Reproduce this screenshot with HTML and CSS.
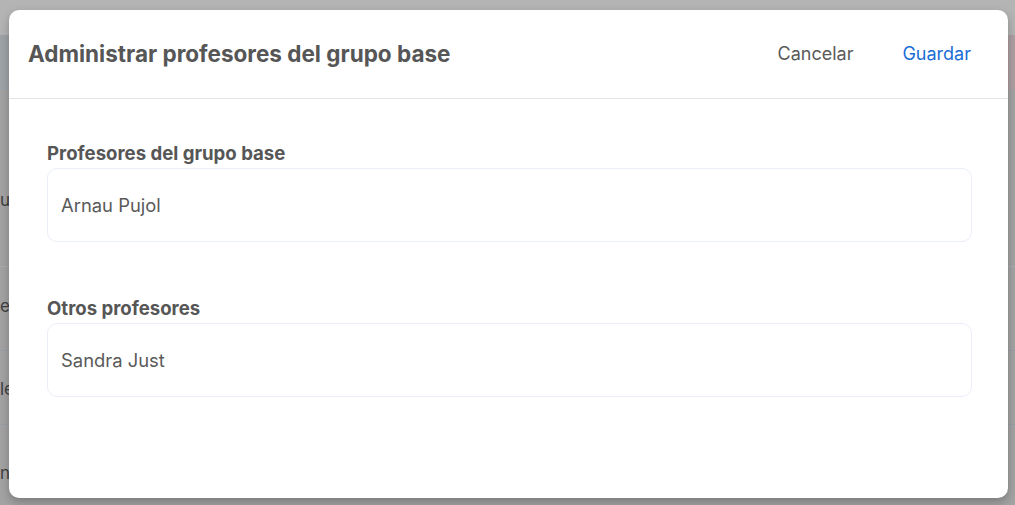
FILE: index.html
```html
<!DOCTYPE html>
<html lang="es">
<head>
<meta charset="utf-8">
<title>Administrar profesores del grupo base</title>
<link rel="stylesheet" href="styles.css">
</head>
<body>
<div class="page">
  <div class="topbar"></div>
  <div class="band"></div>
  <div class="rows">
    <div class="row row-a"><span class="cell">u</span></div>
    <div class="row row-b"><span class="cell">e</span></div>
    <div class="row row-c"><span class="cell">le</span></div>
    <div class="row row-d"><span class="cell">n</span></div>
  </div>
</div>
<div class="modal">
  <header class="modal-header">
    <h1 class="modal-title">Administrar profesores del grupo base</h1>
    <div class="actions">
      <button class="btn btn-cancel">Cancelar</button>
      <button class="btn btn-save">Guardar</button>
    </div>
  </header>
  <div class="modal-body">
    <section class="group">
      <h2 class="group-label">Profesores del grupo base</h2>
      <div class="list">
        <div class="item">Arnau Pujol</div>
      </div>
    </section>
    <section class="group">
      <h2 class="group-label">Otros profesores</h2>
      <div class="list">
        <div class="item">Sandra Just</div>
      </div>
    </section>
  </div>
</div>
</body>
</html>
```
FILE: styles.css
```css
* { box-sizing: border-box; }
html, body { margin: 0; padding: 0; }
body {
  width: 1015px;
  height: 505px;
  overflow: hidden;
  background: #a3a3a3;
  font-family: Inter, "Noto Sans", sans-serif;
}
.page { display: flex; flex-direction: column; height: 100%; }
.topbar { height: 35px; background: #b4b4b4; }
.band {
  height: 55px;
  background: linear-gradient(90deg, #9ea3a8 0%, #a4a3a7 50%, #ad9fa2 100%);
}
.rows { display: flex; flex-direction: column; }
.row {
  display: flex;
  align-items: center;
  border-bottom: 1px solid #9a9fa5;
  color: #3f3f3f;
  font-size: 17px;
}
.row-a { height: 177px; border-bottom-color: #a9abae; }
.row-b { height: 84px; }
.row-c { height: 74px; }
.row-d { height: 80px; border-bottom: none; }
.cell { margin-left: 0; }
.row-a .cell { margin-top: 44px; }
.row-b .cell { margin-top: -6px; }
.row-c .cell { margin-top: 2px; }
.row-d .cell { margin-top: 16px; }

.modal {
  position: absolute;
  left: 9px;
  top: 10px;
  width: 999px;
  height: 488px;
  background: #fff;
  border-radius: 10px;
  box-shadow: 0 4px 10px rgba(0,0,0,0.25);
  display: flex;
  flex-direction: column;
}
.modal-header {
  height: 89px;
  border-bottom: 1px solid #e4e4e4;
  display: flex;
  align-items: center;
  justify-content: space-between;
  padding: 0 37px 2px 19px;
}
.modal-title {
  margin: 0;
  font-size: 22.5px;
  font-weight: 700;
  color: #565656;
}
.actions { display: flex; gap: 49px; align-items: center; }
.btn {
  background: none;
  border: none;
  padding: 0;
  font-family: inherit;
  font-size: 18px;
  cursor: pointer;
}
.btn-cancel { color: #5a5a5a; }
.btn-save { color: #1b6dd6; }

.modal-body {
  padding: 42px 36px 0 38px;
  display: flex;
  flex-direction: column;
  gap: 54px;
}
.group-label {
  margin: 0 0 3px;
  font-size: 18.6px;
  line-height: 24px;
  font-weight: 700;
  color: #565656;
}
.list {
  border: 1px solid #e9eef7;
  border-radius: 10px;
}
.item {
  height: 72px;
  display: flex;
  align-items: center;
  padding-left: 13px;
  font-size: 18.4px;
  color: #5a5a5a;
}
```
